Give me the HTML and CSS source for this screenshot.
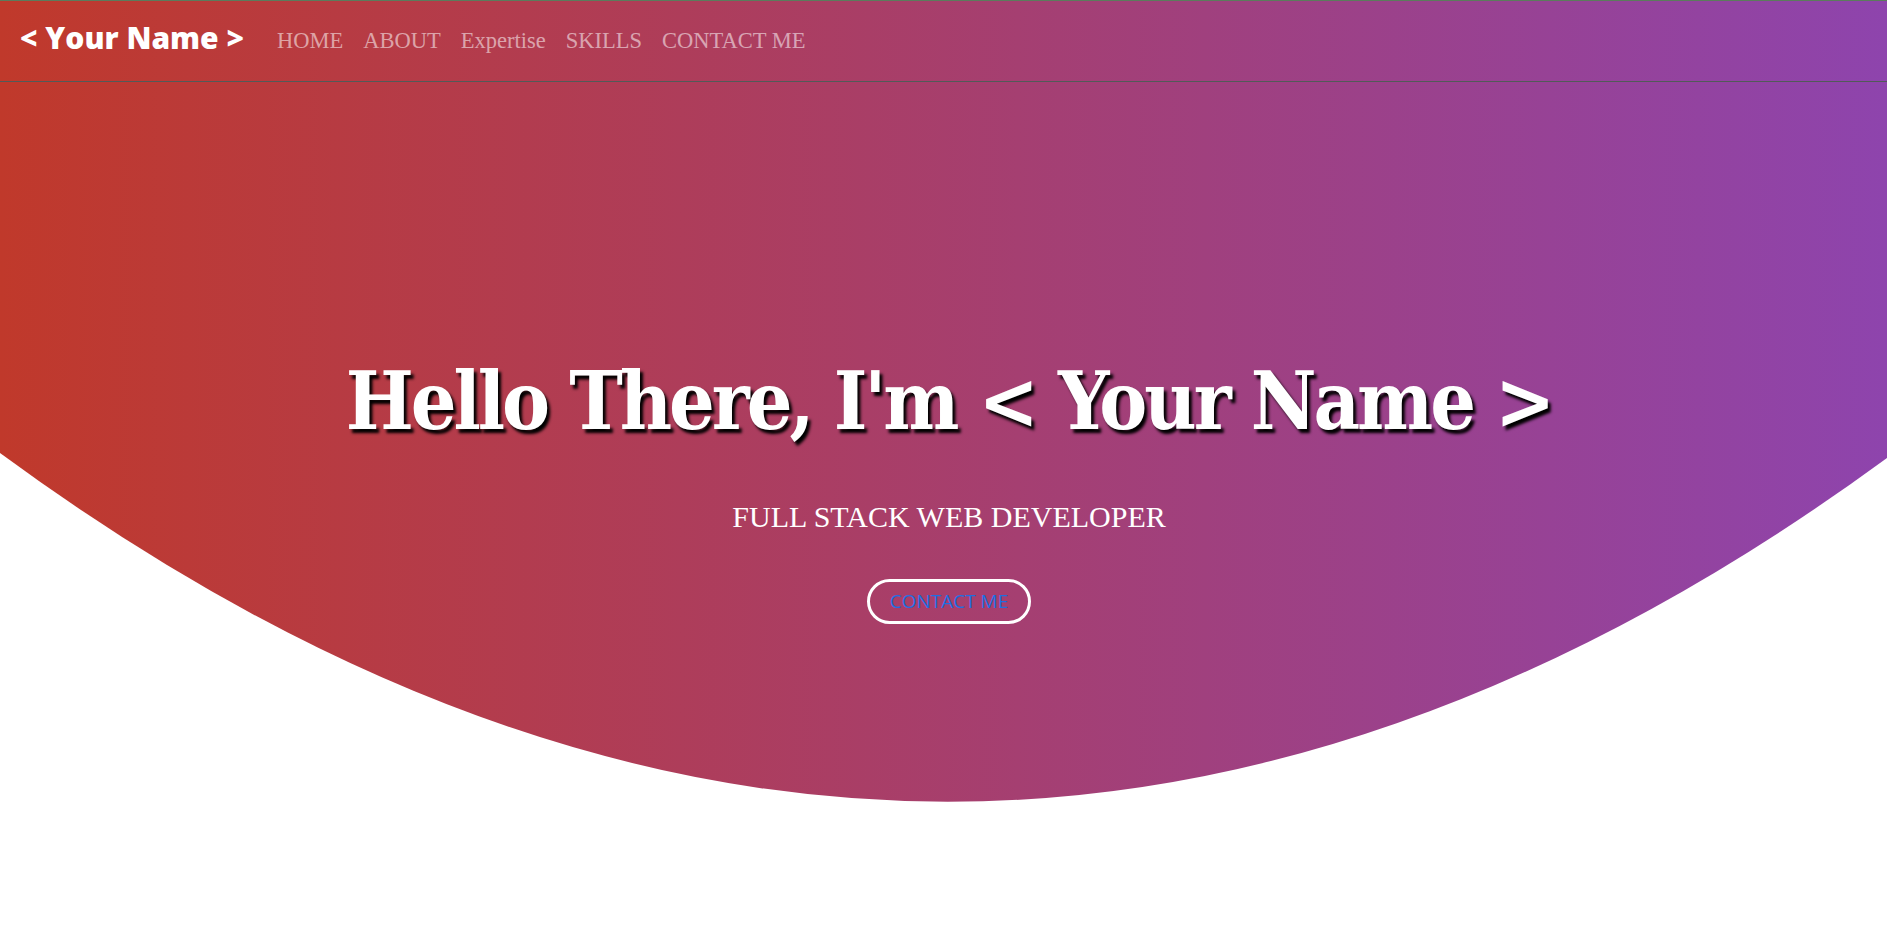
FILE: index.html
```html
<!DOCTYPE html>
<html lang="en">
<head>
<meta charset="utf-8">
<title>Portfolio</title>
<link rel="stylesheet" href="styles.css">
</head>
<body>
<header class="hero">
  <nav class="nav">
    <a class="logo" href="#">&lt; Your Name &gt;</a>
    <ul class="links">
      <li><a href="#">HOME</a></li>
      <li><a href="#">ABOUT</a></li>
      <li><a href="#">Expertise</a></li>
      <li><a href="#">SKILLS</a></li>
      <li><a href="#">CONTACT ME</a></li>
    </ul>
  </nav>
  <div class="intro">
    <h1 class="title">Hello There, I'm &lt; Your Name &gt;</h1>
    <p class="role">FULL STACK WEB DEVELOPER</p>
    <a class="btn" href="#">CONTACT ME</a>
  </div>
</header>
</body>
</html>
```
FILE: styles.css
```css
html, body {
  margin: 0;
  padding: 0;
  background: #ffffff;
}

.hero {
  height: 932px;
  background: linear-gradient(to right, #c0392b, #8e44ad);
  clip-path: path('M0 0 H1887 V458 Q945 1148 0 453 Z');
  display: flex;
  flex-direction: column;
}

.nav {
  display: flex;
  align-items: center;
  height: 80px;
  border-top: 1px solid #5b7b5c;
  border-bottom: 1px solid #525a58;
  padding-left: 20px;
}

.logo {
  font-family: "Open Sans", sans-serif;
  font-weight: 800;
  font-size: 30px;
  color: #ffffff;
  text-decoration: none;
  margin-right: 33px;
  margin-bottom: 7px;
}

.links {
  display: flex;
  gap: 20px;
  list-style: none;
  margin: 0;
  padding: 0;
}

.links a {
  font-family: "Liberation Serif", serif;
  font-size: 22.5px;
  color: rgba(255, 255, 255, 0.55);
  text-decoration: none;
}

.intro {
  display: flex;
  flex-direction: column;
  align-items: center;
  padding-top: 269px;
  padding-left: 11px;
}

.title {
  margin: 0;
  font-family: "DejaVu Serif Condensed", "DejaVu Serif", serif;
  font-stretch: condensed;
  font-weight: 700;
  font-size: 80px;
  line-height: 100.8px;
  letter-spacing: -3px;
  color: #ffffff;
  text-shadow: 3px 4px 3px #000000;
}

.role {
  margin: 48px 0 0;
  font-family: "Liberation Serif", serif;
  font-size: 30px;
  line-height: 33px;
  color: #ffffff;
}

.btn {
  margin-top: 46px;
  border: 3px solid #ffffff;
  border-radius: 23px;
  padding: 7px 20px;
  font-family: "Open Sans", sans-serif;
  font-size: 19px;
  line-height: 25px;
  color: #1d6fe3;
  text-decoration: none;
}
```
